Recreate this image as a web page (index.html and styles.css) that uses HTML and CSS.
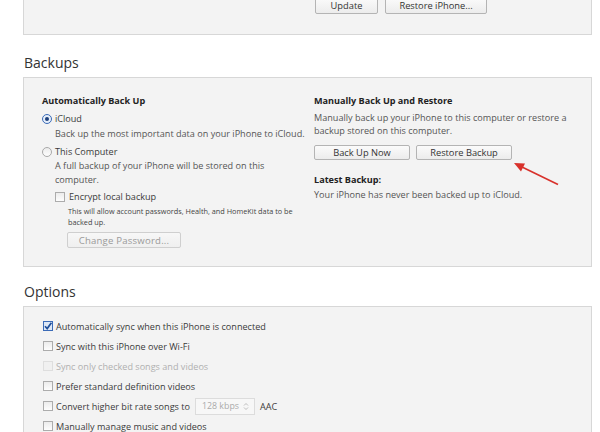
FILE: index.html
```html
<!DOCTYPE html>
<html>
<head>
<meta charset="utf-8">
<link rel="stylesheet" href="styles.css">
</head>
<body>
<div class="page">
  <div class="panel top-panel">
    <div class="col-left"></div>
    <div class="col-right btn-row">
      <button class="btn btn-update">Update</button>
      <button class="btn btn-restore-iphone">Restore iPhone...</button>
    </div>
  </div>

  <h2 class="section-title backups-title">Backups</h2>
  <div class="panel backups-panel">
    <div class="col-left">
      <div class="group-title">Automatically Back Up</div>
      <div class="radio-row first">
        <span class="radio on"></span><span>iCloud</span>
      </div>
      <div class="desc desc-icloud">Back up the most important data on your iPhone to iCloud.</div>
      <div class="radio-row second">
        <span class="radio"></span><span>This Computer</span>
      </div>
      <div class="desc desc-computer">A full backup of your iPhone will be stored on this computer.</div>
      <div class="check-row encrypt">
        <span class="check"></span><span>Encrypt local backup</span>
      </div>
      <div class="small-desc">This will allow account passwords, Health, and HomeKit data to be backed up.</div>
      <button class="btn btn-disabled btn-change">Change Password...</button>
    </div>
    <div class="col-right">
      <div class="group-title">Manually Back Up and Restore</div>
      <div class="rdesc">Manually back up your iPhone to this computer or restore a backup stored on this computer.</div>
      <div class="btn-row manual-btns">
        <button class="btn btn-wide">Back Up Now</button>
        <button class="btn btn-wide">Restore Backup</button>
      </div>
      <div class="group-title latest">Latest Backup:</div>
      <div class="latest-text">Your iPhone has never been backed up to iCloud.</div>
    </div>
  </div>

  <h2 class="section-title options-title">Options</h2>
  <div class="panel options-panel">
    <div class="opt-row"><span class="check checked"><svg viewBox="0 0 10 10" width="10" height="10"><path d="M2 5.2 L4.2 7.6 L8.4 1.8" fill="none" stroke="#1f4f9a" stroke-width="1.7"/></svg></span><span>Automatically sync when this iPhone is connected</span></div>
    <div class="opt-row"><span class="check"></span><span>Sync with this iPhone over Wi-Fi</span></div>
    <div class="opt-row disabled"><span class="check"></span><span>Sync only checked songs and videos</span></div>
    <div class="opt-row"><span class="check"></span><span>Prefer standard definition videos</span></div>
    <div class="opt-row"><span class="check"></span><span>Convert higher bit rate songs to</span><span class="select"><span>128 kbps</span><svg class="updown" viewBox="0 0 6 9" width="6" height="9"><path d="M1 3.5 L3 1.5 L5 3.5 M1 5.5 L3 7.5 L5 5.5" fill="none" stroke="#b5b5b5" stroke-width="0.9"/></svg></span><span class="aac">AAC</span></div>
    <div class="opt-row"><span class="check"></span><span>Manually manage music and videos</span></div>
  </div>

  <svg class="arrow" width="600" height="432" viewBox="0 0 600 432">
    <line x1="558" y1="184.5" x2="522" y2="167" stroke="#d8312b" stroke-width="1.6"/>
    <polygon points="514,163 525,163.5 521,171.5" fill="#d8312b"/>
  </svg>
</div>
</body>
</html>
```

FILE: styles.css
```css
* { box-sizing: border-box; }
html, body { margin: 0; padding: 0; background: #ffffff; }
body {
  font-family: "Open Sans", "Noto Sans", sans-serif;
  font-size: 9.1px;
  color: #3a3a3a;
  overflow: hidden;
  width: 600px;
  height: 432px;
}
.page { position: relative; display: flow-root; width: 600px; height: 432px; }

.panel {
  margin-left: 23px;
  width: 569px;
  background: #f3f3f3;
  border: 1px solid #d7d7d7;
}

.top-panel {
  margin-top: -20px;
  display: grid;
  grid-template-columns: 273px 1fr;
  padding: 16px 0 20px 18px;
}
.btn-row { display: flex; gap: 7px; }

.btn {
  font-family: inherit;
  font-size: 9.3px;
  color: #333;
  height: 17px;
  padding: 0;
  margin: 0;
  background: linear-gradient(#fbfbfb, #ececec);
  border: 1px solid #b4b4b4;
  border-radius: 2px;
  line-height: 15px;
  text-align: center;
  white-space: nowrap;
}
.btn-update { width: 63px; }
.btn-restore-iphone { width: 102px; }

.section-title {
  margin: 0 0 5px 24px;
  font-size: 14px;
  font-weight: 400;
  line-height: 18px;
  color: #333;
}
.backups-title { margin-top: 19px; }
.options-title { margin-top: 16px; }

.backups-panel {
  display: grid;
  grid-template-columns: 272px 1fr;
  padding: 16px 0 17px 18px;
  height: 190px;
}

.group-title {
  font-weight: 700;
  color: #222;
  line-height: 14px;
}

.radio-row, .check-row {
  display: flex;
  align-items: center;
  line-height: 14px;
}
.radio-row.first { margin-top: 4px; }
.radio-row.second { margin-top: 4px; }
.radio {
  width: 10px;
  height: 10px;
  border-radius: 50%;
  border: 1px solid #a9a9a9;
  background: linear-gradient(#ececec, #fdfdfd);
  margin-right: 3px;
  position: relative;
  flex: none;
}
.radio.on { border-color: #3b6bb7; background: #e5eefa; }
.radio.on::after {
  content: "";
  position: absolute;
  left: 2px; top: 2px;
  width: 4px; height: 4px;
  border-radius: 50%;
  background: #1d3f7a;
}

.desc { margin-left: 13px; line-height: 14px; color: #555; }
.desc-icloud { margin-top: 1px; }
.desc-computer { width: 225px; }

.check {
  width: 10px;
  height: 10px;
  border: 1px solid #acacac;
  background: linear-gradient(#ececec, #fdfdfd);
  flex: none;
  display: inline-flex;
  align-items: center;
  justify-content: center;
}
.check svg { display: block; margin: -1px; }
.check.checked { border-color: #3b6bb7; background: #dde8f7; }

.check-row.encrypt { margin: 3px 0 0 13px; }
.check-row.encrypt .check { margin-right: 4px; }

.small-desc {
  margin: 1.5px 0 0 26px;
  font-size: 7.3px;
  line-height: 11px;
  color: #444;
  width: 226px;
}
.btn-disabled {
  color: #9a9a9a;
  border-color: #cfcfcf;
  background: linear-gradient(#f7f7f7, #efefef);
}
.btn-change {
  margin: 4.5px 0 0 25px;
  width: 114px;
  height: 16px;
  font-size: 9.6px;
  letter-spacing: 0.2px;
}

.rdesc { margin-top: 2.5px; line-height: 13px; color: #555; width: 255px; }
.manual-btns { margin-top: 8.5px; gap: 6px; }
.btn-wide { width: 96px; height: 15px; line-height: 13px; }
.group-title.latest { margin-top: 13px; }
.latest-text { margin-top: 1px; line-height: 14px; color: #555; }

.options-panel {
  padding: 9px 0 0 19px;
  height: 140px;
}
.opt-row {
  display: flex;
  align-items: center;
  height: 20px;
  white-space: nowrap;
}
.opt-row .check { margin-right: 3px; }
.opt-row.disabled { color: #b0b0b0; }
.opt-row.disabled .check { border-color: #dedede; background: #f0f0f0; }
.select {
  margin-left: 5px;
  width: 60px;
  height: 17px;
  border: 1px solid #dcdcdc;
  background: #f7f7f7;
  color: #aaa;
  font-size: 8.8px;
  display: inline-flex;
  align-items: center;
  justify-content: space-between;
  padding: 0 5px 0 6px;
  flex: none;
}
.updown { display: block; }
.aac { margin-left: 5px; }

.arrow { position: absolute; left: 0; top: 0; pointer-events: none; }
```
